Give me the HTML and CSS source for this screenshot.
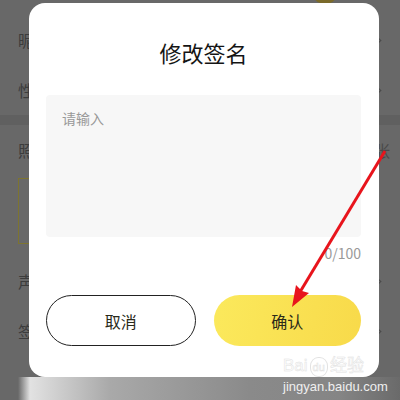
FILE: index.html
```html
<!DOCTYPE html>
<html lang="zh-CN">
<head>
    <meta charset="UTF-8">
    <meta name="viewport" content="width=device-width, initial-scale=1.0">
    <title>修改签名</title>
    <link rel="stylesheet" href="styles.css">
</head>
<body>
    <div class="page">
        <span class="avatar"></span>
        <div class="list">
            <div class="row"><span>昵称</span><i class="chev"></i></div>
            <div class="row"><span>性别</span><i class="chev"></i></div>
            <div class="split"></div>
            <div class="row"><span>照片墙</span><span class="count">0/6张</span></div>
            <div class="photoBox"></div>
            <div class="row"><span>声音</span><i class="chev"></i></div>
            <div class="row"><span>签名</span><i class="chev"></i></div>
            <div class="row"><span>：</span></div>
        </div>

        <div class="dialog">
            <div class="dialogTitle">修改签名</div>
            <div class="inputBox">请输入</div>
            <div class="counter">0/100</div>
            <div class="btnRow">
                <button type="button" class="btn btnCancel">取消</button>
                <button type="button" class="btn btnOk">确认</button>
            </div>
            <div class="mark">Bai<span class="paw">du</span>经验</div>
        </div>

        <!-- red pointer drawn over the screenshot -->
        <svg class="arrow" width="400" height="400" viewBox="0 0 400 400">
            <line x1="385" y1="151" x2="300" y2="292" stroke="#e8141c" stroke-width="3"/>
            <polygon points="292,307 296,285 302,291 309,293" fill="#e8141c"/>
        </svg>

        <div class="band">jingyan.baidu.com</div>
    </div>
</body>
</html>
```

FILE: styles.css
```css
body {
    margin: 0;
    font-family: "Noto Sans CJK SC", "Noto Sans", sans-serif;
}

.page {
    position: relative;
    width: 400px;
    height: 400px;
    overflow: hidden;
    background-color: #686868;
}

.avatar {
    position: absolute;
    top: -12px;
    left: 314px;
    width: 22px;
    height: 16px;
    border-radius: 50%;
    background-color: #7a6a2a;
}

/* page under the mask, painted in its dimmed colours */
.list {
    padding-top: 15px;
}

.row {
    display: flex;
    align-items: center;
    justify-content: space-between;
    height: 50px;
    padding: 0 18px;
    font-size: 16px;
    color: #3c3c3c;
}

.split {
    height: 10px;
    background-color: #606060;
}

.count {
    margin-right: -8px;
    font-size: 16px;
    color: #4a4a4a;
}

.chev {
    width: 6px;
    height: 6px;
    margin-right: 2px;
    border-top: 1px solid #4a4a4a;
    border-right: 1px solid #4a4a4a;
    transform: rotate(45deg);
}

.photoBox {
    width: 80px;
    height: 64px;
    margin: 3px 0 12px 18px;
    border: 1px solid #7d7430;
}

/* dialog */
.dialog {
    position: absolute;
    top: 3px;
    left: 29px;
    width: 350px;
    height: 374px;
    box-sizing: border-box;
    padding: 34px 18px 0 17px;
    background-color: #fff;
    border-radius: 16px;
}

.dialogTitle {
    text-align: center;
    font-size: 22px;
    line-height: 30px;
    font-weight: 400;
    color: #141414;
}

.inputBox {
    height: 142px;
    margin-top: 28px;
    box-sizing: border-box;
    padding: 12px 16px;
    background-color: #f7f7f7;
    border-radius: 4px;
    font-size: 14px;
    line-height: 22px;
    color: #999;
}

.counter {
    margin-top: 6px;
    text-align: right;
    font-size: 14px;
    line-height: 20px;
    color: #999;
}

.btnRow {
    display: flex;
    gap: 18px;
    margin-top: 32px;
}

.btn {
    flex: 1;
    height: 51px;
    border-radius: 26px;
    font-family: inherit;
    font-size: 16px;
    font-weight: 400;
    color: #2a2a1a;
}

.btnCancel {
    background-color: #fff;
    border: 1.5px solid #222;
}

.btnOk {
    border: none;
    background: linear-gradient(100deg, #fbe95c, #f8da4a);
}

.mark {
    position: absolute;
    left: 254px;
    top: 354px;
    font-family: "Liberation Sans", sans-serif;
    font-size: 17px;
    line-height: 18px;
    color: #fff;
    -webkit-text-stroke: 0.5px #e2e2e2;
    white-space: nowrap;
}

.paw {
    display: inline-block;
    margin: 0 2px;
    padding: 0 2px;
    font-size: 11px;
    border: 1px solid #e2e2e2;
    border-radius: 45%;
}

.arrow {
    position: absolute;
    top: 0;
    left: 0;
}

.band {
    position: absolute;
    left: 0;
    bottom: 0;
    width: 400px;
    height: 23px;
    box-sizing: border-box;
    padding-left: 283px;
    background: linear-gradient(to right, #686868 0, #686868 18px, #e2e2e2 30px, #a9a9a9 110px, #8a8a8a 250px, #858585 340px, #6a6a6a 400px);
    font-family: "Liberation Sans", sans-serif;
    font-size: 13px;
    line-height: 20px;
    color: #efefef;
}
```
